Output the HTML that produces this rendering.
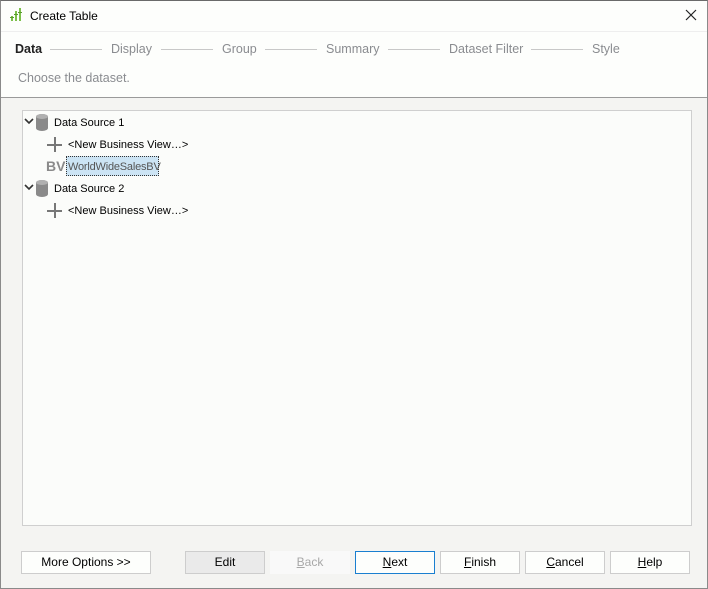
<!DOCTYPE html>
<html><head><style>
*{margin:0;padding:0;box-sizing:border-box}
body{width:708px;height:589px;background:#f4f4f2;font-family:"Liberation Sans",sans-serif;font-size:12px;color:#000;position:relative;overflow:hidden}
.win{position:absolute;left:0;top:0;width:708px;height:589px;border:1px solid #8a8a8a;border-top-color:#6a6a6a}
.top{position:absolute;left:1px;top:1px;width:706px;height:97px;background:#fdfefc;border-bottom:1px solid #9a9a9a}
.tsep{position:absolute;left:1px;top:31px;width:706px;height:1px;background:#eeeeee}
.abs{position:absolute;white-space:nowrap}
.t{font-size:11px;letter-spacing:0}
.step{position:absolute;top:42px;font-size:12.5px;color:#8a8c90}
.line{position:absolute;top:49px;height:1px;background:#c8c8c8}
.tree{position:absolute;left:22px;top:110px;width:670px;height:416px;background:#fbfcfa;border:1px solid #cfcfcf}
.btn{position:absolute;top:551px;height:23px;border:1px solid #cdcdcd;background:#fdfefc;text-align:center;line-height:21px;font-size:12px}
.cyl{position:absolute;width:12px;height:17px;background:#8a8a8a;border-radius:6px/3px}
.cyl:before{content:"";position:absolute;left:0;top:0;width:12px;height:5px;border-radius:50%;background:#b0b0b0}
.plus{position:absolute;width:15px;height:15px}
.plus:before{content:"";position:absolute;left:7px;top:0;width:2px;height:15px;background:#777}
.plus:after{content:"";position:absolute;left:0;top:7px;width:15px;height:2px;background:#777}
</style></head><body>
<div class="win"></div>
<div class="top"></div>
<div class="tsep"></div>
<svg class="abs" style="left:10px;top:7px" width="14" height="16"><rect x="1" y="9" width="2" height="5" fill="#7cc04a"/><rect x="5" y="4" width="2" height="10" fill="#7cc04a"/><rect x="9" y="1" width="2" height="13" fill="#7cc04a"/><rect x="0" y="10" width="4" height="1" fill="#5a9a30"/><rect x="4" y="7" width="4" height="1" fill="#5a9a30"/><rect x="8" y="5" width="4" height="1" fill="#5a9a30"/></svg>
<div class="abs" style="left:30px;top:9px;font-size:12px">Create Table</div>
<svg class="abs" style="left:685px;top:9px" width="12" height="12"><path d="M1 1L11 11M11 1L1 11" stroke="#222" stroke-width="1.2"/></svg>
<div class="step" style="left:15px;color:#222;font-weight:bold">Data</div>
<div class="line" style="left:50px;width:52px"></div>
<div class="step" style="left:111px">Display</div>
<div class="line" style="left:161px;width:52px"></div>
<div class="step" style="left:222px">Group</div>
<div class="line" style="left:265px;width:52px"></div>
<div class="step" style="left:326px">Summary</div>
<div class="line" style="left:388px;width:52px"></div>
<div class="step" style="left:449px">Dataset Filter</div>
<div class="line" style="left:531px;width:52px"></div>
<div class="step" style="left:592px">Style</div>
<div class="abs" style="left:18px;top:71px;font-size:12.5px;color:#8a8c90">Choose the dataset.</div>
<div class="tree"></div>
<svg class="abs" style="left:24px;top:118px" width="10" height="8"><path d="M1 1L5 5L9 1" stroke="#333" stroke-width="1.6" fill="none"/></svg>
<div class="cyl" style="left:36px;top:114px"></div>
<div class="abs t" style="left:54px;top:117px">Data Source 1</div>
<div class="plus" style="left:47px;top:137px"></div>
<div class="abs t" style="left:68px;top:139px">&lt;New Business View…&gt;</div>
<div class="abs" style="left:46px;top:158px;font-weight:bold;font-size:14px;color:#8a8a8a">BV</div>
<div class="abs t" style="left:66px;top:156px;width:93px;height:20px;background:#cce4f4;border:1px dotted #333;color:#555;padding:4px 0 0 1px;letter-spacing:-0.2px">WorldWideSalesBV</div>
<svg class="abs" style="left:24px;top:184px" width="10" height="8"><path d="M1 1L5 5L9 1" stroke="#333" stroke-width="1.6" fill="none"/></svg>
<div class="cyl" style="left:36px;top:180px"></div>
<div class="abs t" style="left:54px;top:183px">Data Source 2</div>
<div class="plus" style="left:47px;top:203px"></div>
<div class="abs t" style="left:68px;top:205px">&lt;New Business View…&gt;</div>
<div class="btn" style="left:21px;width:130px">More Options &gt;&gt;</div>
<div class="btn" style="left:185px;width:80px;background:#eaeaea">Edit</div>
<div class="btn" style="left:270px;width:80px;background:#f9f9f9;border-color:#f9f9f9;color:#a8a8a8"><u>B</u>ack</div>
<div class="btn" style="left:355px;width:80px;border-color:#1a7fd0"><u>N</u>ext</div>
<div class="btn" style="left:440px;width:80px"><u>F</u>inish</div>
<div class="btn" style="left:525px;width:80px"><u>C</u>ancel</div>
<div class="btn" style="left:610px;width:80px"><u>H</u>elp</div>
</body></html>
